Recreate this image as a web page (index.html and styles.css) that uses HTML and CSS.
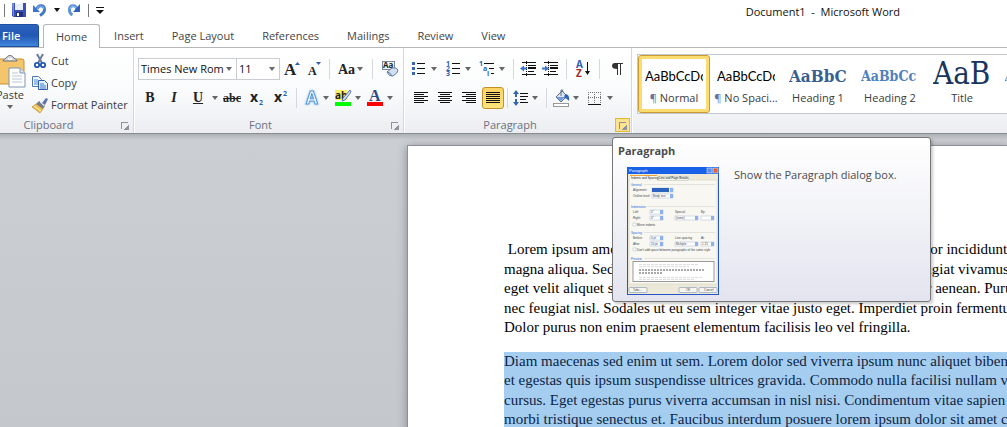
FILE: index.html
```html
<!DOCTYPE html>
<html lang="en">
<head>
<meta charset="utf-8">
<title>Document1 - Microsoft Word</title>
<link rel="stylesheet" href="styles.css">
</head>
<body>
<div class="window">
  <header class="titlebar">
    <div class="quick">
      <span class="quick-sep"></span>
      <button class="quick-btn" aria-label="Save"><svg width="14" height="14" viewBox="0 0 14 14"><path d="M0 0h14v14H1.500L0 12.500z" fill="#3c50b4"/><path d="M0 0h2v13H1z" fill="#7a8be0"/><path d="M3 0h8v7H3z" fill="#e8eefb"/><path d="M3 0h8v1H3z" fill="#fff"/><path d="M4 9h7v5H4z" fill="#23307a"/><path d="M5 10h2v3H5z" fill="#fff"/></svg></button>
      <button class="quick-btn" aria-label="Undo"><svg width="14" height="14" viewBox="0 0 14 14"><path d="M4 6C5 2 11 1.500 11.500 6c.3 3-2 5-4.500 6.500" fill="none" stroke="#3f78c8" stroke-width="3"/><path d="M4 6C5 2 10.500 2 11 6" fill="none" stroke="#7fabe6" stroke-width="1.200"/><path d="M0 2v7h7z" fill="#3a74cc"/></svg></button>
      <button class="drop quick-drop" aria-label="Undo history"></button>
      <button class="quick-btn" aria-label="Repeat"><svg width="14" height="14" viewBox="0 0 14 14"><path d="M10 6C9 2 3 1.500 2.500 6c-.3 3 1 5 3 6" fill="none" stroke="#5a92da" stroke-width="3"/><path d="M13 1v8H6z" fill="#2f63b8"/><path d="M3 6c0-3 4-4 6-1" fill="none" stroke="#9cc3f2" stroke-width="1"/></svg></button>
      <span class="quick-sep"></span>
      <button class="quick-more" aria-label="Customize"><svg width="8" height="8" viewBox="0 0 8 8"><path d="M0 1h8v1H0zM0 4h8L4 8z" fill="#111"/></svg></button>
    </div>
    <h1 class="title">Document1&nbsp; -&nbsp; Microsoft Word</h1>
  </header>

  <nav class="tabs">
    <button class="tab file">File</button>
    <button class="tab active">Home</button>
    <button class="tab">Insert</button>
    <button class="tab">Page Layout</button>
    <button class="tab">References</button>
    <button class="tab">Mailings</button>
    <button class="tab">Review</button>
    <button class="tab">View</button>
  </nav>

  <section class="ribbon">
    <div class="group clipboard">
      <div class="clip-body">
        <button class="paste"><svg width="32" height="32" viewBox="0 0 32 32"><rect x="3" y="4" width="27" height="25" rx="2" fill="#f4c56a" stroke="#c98f2e"/><path d="M9 6c0-2 3-2 4-4s5-2 6 0 4 2 4 4z" fill="#d4d7dc" stroke="#6d7278"/><path d="M14 4h4" stroke="#fff" stroke-width="1.500"/><path d="M15 13h11l5 5v14H15z" fill="#fff" stroke="#8194b4"/><path d="M26 13v5h5" fill="#dce6f5" stroke="#8194b4"/><path d="M18 18h6M18 21h10M18 24h10M18 27h10" stroke="#b9c4d6"/></svg><span>Paste</span><i class="drop"></i></button>
        <div class="clip-list">
          <button class="clip-btn"><svg width="16" height="16" viewBox="0 0 16 16"><path d="M5 1l5 9M11 1L6 10" stroke="#6c7f99" stroke-width="2"/><circle cx="5" cy="12" r="2.200" fill="none" stroke="#2458b0" stroke-width="1.800"/><circle cx="11" cy="12" r="2.200" fill="none" stroke="#2458b0" stroke-width="1.800"/></svg>Cut</button>
          <button class="clip-btn"><svg width="16" height="16" viewBox="0 0 16 16"><path d="M.5 1.500h6l3 3v7h-9z" fill="#f4f8ff" stroke="#4a76b8"/><path d="M2 5h4M2 7h5M2 9h5" stroke="#4a8ad8"/><path d="M6.500 5.500h6l3 3v6h-9z" fill="#e4eefc" stroke="#2f5da8"/><path d="M8 9h4M8 11h6M8 13h6" stroke="#3a78cc"/></svg>Copy</button>
          <button class="clip-btn"><svg width="16" height="16" viewBox="0 0 16 16"><path d="M10 6l4-5 2 1-3 6z" fill="#5b74b0"/><path d="M7 4l6 5-2 3-7-5z" fill="#777d88"/><path d="M8 5l4 4" stroke="#d9dce2"/><path d="M4 7l7 5-3 4-8-6z" fill="#edc153" stroke="#ab7c26" stroke-width=".6"/><path d="M2 9l7 5" stroke="#fff0b0"/></svg>Format Painter</button>
        </div>
      </div>
      <footer class="caption">Clipboard<button class="launch" aria-label="Clipboard dialog"></button></footer>
    </div>

    <div class="group font">
      <div class="row row-top">
        <button class="combo combo-font">Times New Rom<i class="drop"></i></button>
        <button class="combo combo-size">11<i class="drop"></i></button>
        <button class="tool" aria-label="Grow font"><svg width="18" height="18" viewBox="0 0 18 18"><text x="1" y="15" class="serif-b s17">A</text><path d="M12 5h5l-2.500-3z" fill="#2f5db0"/></svg></button>
        <button class="tool tool-s" aria-label="Shrink font"><svg width="18" height="18" viewBox="0 0 18 18"><text x="3" y="15" class="serif-b s12">A</text><path d="M11 2h5l-2.500 3z" fill="#2f5db0"/></svg></button>
        <span class="sep"></span>
        <button class="split" aria-label="Change case"><svg width="20" height="18" viewBox="0 0 20 18"><text x="3" y="14" class="serif-b s14">Aa</text></svg><i class="drop"></i></button>
        <span class="sep"></span>
        <button class="tool" aria-label="Clear formatting"><svg width="18" height="18" viewBox="0 0 18 18"><rect x="1.500" y="1.500" width="12" height="8" fill="#eef2f8" stroke="#7c8798"/><text x="2" y="8" class="sans-b s8">Aa</text><path d="M6 12l5-4q5-1 6 2 0 3-5 6-4 1-6-4z" fill="#d3dff2" stroke="#637ca8"/><path d="M6 12q3 0 5 4" fill="none" stroke="#637ca8"/></svg></button>
      </div>
      <div class="row">
        <button class="tool" aria-label="Bold"><b class="glyph">B</b></button>
        <button class="tool" aria-label="Italic"><b class="glyph"><em>I</em></b></button>
        <button class="tool" aria-label="Underline"><b class="glyph under">U</b></button>
        <button class="arrow" aria-label="Underline style"><i class="drop"></i></button>
        <button class="tool" aria-label="Strikethrough"><b class="glyph strike">abc</b></button>
        <button class="tool" aria-label="Subscript"><svg width="18" height="18" viewBox="0 0 18 18"><text x="3" y="13" class="sans-b s14">x</text><text x="12" y="16" class="sans-b s7 blue">2</text></svg></button>
        <button class="tool" aria-label="Superscript"><svg width="18" height="18" viewBox="0 0 18 18"><text x="3" y="13" class="sans-b s14">x</text><text x="12" y="7" class="sans-b s7 blue">2</text></svg></button>
        <span class="sep"></span>
        <button class="split" aria-label="Text effects"><svg width="20" height="18" viewBox="0 0 20 18"><text x="5" y="15" class="sans-b s17 effect">A</text></svg><i class="drop"></i></button>
        <button class="split" aria-label="Highlight colour"><svg width="20" height="18" viewBox="0 0 20 18"><path d="M2 1h12v10H2z" fill="#f7ee6a"/><text x="2" y="10" class="sans-b s10">ab</text><path d="M17 1l1 2-6 8-3 1 1-3z" fill="#cfdcf4" stroke="#3d5da0" stroke-width=".8"/><path d="M2 13h16v4H2z" fill="#0f0"/></svg><i class="drop"></i></button>
        <button class="split" aria-label="Font colour"><svg width="20" height="18" viewBox="0 0 20 18"><text x="4" y="12" class="serif-b s16 navy">A</text><path d="M2 13h16v4H2z" fill="#f00"/></svg><i class="drop"></i></button>
      </div>
      <footer class="caption">Font<button class="launch" aria-label="Font dialog"></button></footer>
    </div>

    <div class="group paragraph">
      <div class="row row-top">
        <button class="split wide" aria-label="Bullets"><svg width="20" height="18" viewBox="0 0 20 18"><path d="M3 2h3v3H3zM3 7h3v3H3zM3 12h3v3H3z" fill="#3a66b8"/><path d="M8 3.500h8M8 8.500h8M8 13.500h8" stroke="#111"/></svg><i class="drop"></i></button>
        <button class="split wide" aria-label="Numbering"><svg width="20" height="18" viewBox="0 0 20 18"><text x="3" y="6" class="sans-b s7 blue">1</text><text x="3" y="11" class="sans-b s7 blue">2</text><text x="3" y="16" class="sans-b s7 blue">3</text><path d="M9 3.500h8M9 8.500h8M9 13.500h8" stroke="#111"/></svg><i class="drop"></i></button>
        <button class="split" aria-label="Multilevel list"><svg width="20" height="18" viewBox="0 0 20 18"><text x="2" y="6" class="sans-b s7 blue">1</text><text x="6" y="11" class="sans-b s7 blue">a</text><text x="10" y="16" class="sans-b s7 blue">i</text><path d="M7 3.500h10M12 8.500h5M14 13.500h3" stroke="#111"/></svg><i class="drop"></i></button>
        <span class="sep"></span>
        <button class="tool tool-s" aria-label="Decrease indent"><svg width="18" height="18" viewBox="0 0 18 18"><path d="M3 2.500h14M9 5.500h8M9 11.500h6M3 14.500h14" stroke="#111"/><path d="M9 7h8v2H9z" fill="#111"/><path d="M7.500 1v16" stroke="#111" stroke-dasharray="1 1"/><path d="M1 8.500l4-3v2h3v2H5v2z" fill="#3c74cc"/></svg></button>
        <button class="tool" aria-label="Increase indent"><svg width="18" height="18" viewBox="0 0 18 18"><path d="M3 2.500h14M9 5.500h8M9 11.500h6M3 14.500h14" stroke="#111"/><path d="M9 7h8v2H9z" fill="#111"/><path d="M7.500 1v16" stroke="#111" stroke-dasharray="1 1"/><path d="M8 8.500l-4-3v2H1v2h3v2z" fill="#3c74cc"/></svg></button>
        <span class="sep"></span>
        <button class="tool" aria-label="Sort"><svg width="18" height="18" viewBox="0 0 18 18"><text x="2" y="8" class="sans-b s10 blue">A</text><text x="2" y="17" class="sans-b s10 red">Z</text><path d="M13.500 2v11" stroke="#111"/><path d="M11 11h5l-2.500 4z" fill="#111"/></svg></button>
        <span class="sep"></span>
        <button class="tool" aria-label="Show marks"><svg width="18" height="18" viewBox="0 0 18 18"><path d="M7 3h9v1h-2v11h-1V4h-2v11h-1V9C7 9 5 8 5 6s1-3 3-3z" fill="#333"/></svg></button>
      </div>
      <div class="row">
        <button class="tool" aria-label="Align left"><svg width="14" height="14" viewBox="0 0 14 14"><path d="M0 1.500h14M0 3.500h10M0 5.500h14M0 7.500h10M0 9.500h14M0 11.500h10" stroke="#111"/></svg></button>
        <button class="tool" aria-label="Centre"><svg width="14" height="14" viewBox="0 0 14 14"><path d="M0 1.500h14M2 3.500h10M0 5.500h14M2 7.500h10M0 9.500h14M2 11.500h10" stroke="#111"/></svg></button>
        <button class="tool" aria-label="Align right"><svg width="14" height="14" viewBox="0 0 14 14"><path d="M0 1.500h14M4 3.500h10M0 5.500h14M4 7.500h10M0 9.500h14M4 11.500h10" stroke="#111"/></svg></button>
        <button class="tool on" aria-label="Justify"><svg width="14" height="14" viewBox="0 0 14 14"><path d="M0 1.500h14M0 3.500h14M0 5.500h14M0 7.500h14M0 9.500h14M0 11.500h14" stroke="#111"/></svg></button>
        <span class="sep sep-s"></span>
        <button class="split" aria-label="Line spacing"><svg width="20" height="18" viewBox="0 0 20 18"><path d="M6 1l3 4H7v3H5V5H3zM6 17l-3-4h2v-3h2v3h2z" fill="#3565b8"/><path d="M10 4.500h8M10 7.500h8M10 10.500h6M10 13.500h8" stroke="#111"/></svg><i class="drop"></i></button>
        <span class="sep"></span>
        <button class="split wide" aria-label="Shading"><svg width="20" height="18" viewBox="0 0 20 18"><path d="M5 8l6-6 5 5-6 6z" fill="#dbe5f2" stroke="#5d6f8c"/><path d="M10 7V1q2-1 2 2" fill="none" stroke="#5d6f8c"/><path d="M14 5q5 0 4 7-2-3-5-3z" fill="#2e62b8"/><path d="M5 8h9l-4 4z" fill="#6e9bdc"/><rect x="2.500" y="14.500" width="15" height="3" fill="#fff" stroke="#999"/></svg><i class="drop"></i></button>
        <button class="split wide" aria-label="Borders"><svg width="20" height="18" viewBox="0 0 20 18"><path d="M3 3.500h13M3 8.500h13M3.500 3v11M9.500 3v11M15.500 3v11" stroke="#777" stroke-dasharray="1 1"/><path d="M3 15.500h13" stroke="#111"/></svg><i class="drop"></i></button>
      </div>
      <footer class="caption">Paragraph<button class="launch hot" aria-label="Paragraph dialog" aria-describedby="tip"></button></footer>

      <aside class="tooltip" id="tip" role="tooltip">
        <h2>Paragraph</h2>
        <div class="tip-body">
          <svg class="thumb" width="92" height="128" viewBox="0 0 92 128">
            <rect width="92" height="128" fill="#2456c8"/><rect width="92" height="7" fill="#1760e8"/>
            <rect x="1" y="7" width="90" height="120" fill="#ece9d8"/>
            <rect x="80" y="1" width="5" height="5" fill="#5b8df0" stroke="#fff" stroke-width=".5"/><rect x="86" y="1" width="5" height="5" fill="#e0603a" stroke="#fff" stroke-width=".5"/>
            <text x="2" y="5" class="mini mini-w">Paragraph</text>
            <rect x="2" y="13" width="88" height="104" fill="#f8f7f1" stroke="#d0cdbf" stroke-width=".5"/>
            <rect x="3" y="8.500" width="27" height="5" fill="#f8f7f1"/><path d="M3 8.500h27" stroke="#f0a030"/>
            <rect x="31" y="9.500" width="30" height="4" fill="#f4f3ea" stroke="#c4c1b2" stroke-width=".5"/>
            <text x="4" y="12" class="mini">Indents and Spacing</text><text x="32" y="12" class="mini">Line and Page Breaks</text>
            <g class="mini mini-b"><text x="4" y="19">General</text><text x="4" y="41">Indentation</text><text x="4" y="67">Spacing</text><text x="4" y="93">Preview</text></g>
            <path d="M17 17.500h71M20 39.500h68M17 65.500h71M17 91.500h71" stroke="#d6d5cc" stroke-width=".6"/>
            <g fill="#fff" stroke="#a8bbd8" stroke-width=".5"><rect x="25" y="21" width="21" height="4"/><rect x="25" y="27" width="21" height="4"/><rect x="23" y="43" width="13" height="4"/><rect x="23" y="49" width="13" height="4"/><rect x="48" y="49" width="23" height="4"/><rect x="74" y="49" width="13" height="4"/><rect x="23" y="69" width="13" height="4"/><rect x="23" y="75" width="13" height="4"/><rect x="48" y="75" width="23" height="4"/><rect x="74" y="75" width="13" height="4"/><rect x="6" y="56" width="3" height="3"/><rect x="6" y="81" width="3" height="3"/></g>
            <rect x="25" y="21" width="17" height="4" fill="#2c62c0"/>
            <path d="M43 21h3v4h-3zM43 27h3v4h-3zM33 43h3v4h-3zM33 49h3v4h-3zM68 49h3v4h-3zM84 49h3v4h-3zM33 69h3v4h-3zM33 75h3v4h-3zM68 75h3v4h-3zM84 75h3v4h-3z" fill="#8eb0ee"/>
            <g class="mini"><text x="6" y="24">Alignment:</text><text x="6" y="30">Outline level:</text><text x="26" y="30">Body text</text><text x="6" y="46">Left:</text><text x="6" y="52">Right:</text><text x="48" y="46">Special:</text><text x="74" y="46">By:</text><text x="10" y="59">Mirror indents</text><text x="6" y="72">Before:</text><text x="6" y="78">After:</text><text x="48" y="72">Line spacing:</text><text x="74" y="72">At:</text><text x="10" y="84">Don't add space between paragraphs of the same style</text></g>
            <g class="mini"><text x="24" y="46">0"</text><text x="24" y="52">0"</text><text x="49" y="52">(none)</text><text x="24" y="72">0 pt</text><text x="24" y="78">10 pt</text><text x="49" y="78">Multiple</text><text x="75" y="78">1.15</text></g>
            <rect x="6" y="94.500" width="81" height="20" fill="#fff" stroke="#999"/>
            <path d="M12 97.500h60M12 99.500h50M12 110.500h63M12 112.500h56" stroke="#ddd" stroke-dasharray="3 1"/><path d="M12 103h65M12 106h24" stroke="#aaa" stroke-width="2" stroke-dasharray="2 1"/>
            <g fill="#f6f5ef" stroke="#8294b2" stroke-width=".6"><rect x="2" y="120.500" width="18" height="5" rx="1"/><rect x="52" y="120.500" width="18" height="5" rx="1"/><rect x="72" y="120.500" width="18" height="5" rx="1"/></g>
            <g class="mini"><text x="6" y="124">Tabs...</text><text x="59" y="124">OK</text><text x="77" y="124">Cancel</text></g>
          </svg>
          <p>Show the Paragraph dialog box.</p>
        </div>
      </aside>
    </div>

    <div class="group styles">
      <div class="gallery">
        <button class="style selected"><span class="preview">AaBbCcDc</span><span class="name"><i>¶</i> Normal</span></button>
        <button class="style"><span class="preview">AaBbCcDc</span><span class="name"><i>¶</i> No Spaci...</span></button>
        <button class="style"><span class="preview h1">AaBbCc</span><span class="name">Heading 1</span></button>
        <button class="style"><span class="preview h2">AaBbCc</span><span class="name">Heading 2</span></button>
        <button class="style"><span class="preview big">AaB</span><span class="name">Title</span></button>
        <button class="style"><span class="preview sub">AaBbCc</span><span class="name">Subtitle</span></button>
      </div>
    </div>
  </section>

  <main class="workspace">
    <article class="page">
      <p>
        <span class="line">&nbsp;Lorem ipsum amet, consectetur adipiscing elit, a sed do eiusmod tempor incididunt</span>
        <span class="line">magna aliqua. Sed turpis tincidunt id aliquet risus feugiat in metus. Feugiat vivamus</span>
        <span class="line">eget velit aliquet sagittis id consectetur purus ut faucibus vitae pulvinar aenean. Purus</span>
        <span class="line">nec feugiat nisl. Sodales ut eu sem integer vitae justo eget. Imperdiet proin fermentum</span>
        <span class="line">Dolor purus non enim praesent elementum facilisis leo vel fringilla.</span>
      </p>
      <p class="marked">
        <span class="line">Diam maecenas sed enim ut sem. Lorem dolor sed viverra ipsum nunc aliquet bibendum</span>
        <span class="line">et egestas quis ipsum suspendisse ultrices gravida. Commodo nulla facilisi nullam vehicula</span>
        <span class="line">cursus. Eget egestas purus viverra accumsan in nisl nisi. Condimentum vitae sapien pellentesque</span>
        <span class="line">morbi tristique senectus et. Faucibus interdum posuere lorem ipsum dolor sit amet consectetur</span>
      </p>
    </article>
  </main>
</div>
</body>
</html>
```
FILE: styles.css
```css
* { box-sizing: border-box; }
html, body { height: 100%; }
body { margin: 0; overflow: hidden; font: 11px/16px "Open Sans", "Noto Sans", sans-serif; color: #3b3b3b; background: #fff; }
button { margin: 0; padding: 0; border: 0; background: none; font: inherit; color: inherit; }
svg { display: block; flex: none; overflow: visible; }
.window { display: flex; flex-direction: column; min-height: 100vh; }

/* Title bar */
.titlebar { display: flex; align-items: center; height: 24px; }
.quick { display: flex; align-items: center; flex: 1; gap: 7px; padding: 0 0 4px 4px; }
.quick-sep { width: 1px; height: 13px; background: #777; }
.quick-btn { display: flex; }
.title { margin: 0; padding-right: 107px; font-size: 11px; font-weight: 400; color: #111; }
.drop { flex: none; width: 6px; height: 4px; background: #666; clip-path: polygon(0 0, 100% 0, 50% 100%); }
.quick-drop { background: #111; }

/* Tabs */
.tabs { display: flex; align-items: flex-end; height: 24px; border-bottom: 1px solid #b4b6ba; }
.tab { height: 23px; padding: 0 14px; color: #444; }
.tab.file { width: 39px; padding: 0 0 0 2px; margin-right: 4px; text-align: left; color: #fff; font-weight: 600; border: 1px solid #1f4fa0; border-left: 0; border-radius: 0 3px 0 0; background: linear-gradient(#2c64bd, #2358b4 50%, #3f86dc); }
.tab.active { height: 24px; margin-bottom: -1px; padding: 0 12px; border: 1px solid #b4b6ba; border-bottom: 0; border-radius: 3px 3px 0 0; background: #fff; }

/* Ribbon */
.ribbon { position: relative; z-index: 1; display: flex; height: 86px; background: linear-gradient(#fff, #fafbfc 50%, #ebedf1); border-bottom: 1px solid #888c93; }
.group { position: relative; display: flex; flex-direction: column; flex: none; border-right: 1px solid #d3d6db; box-shadow: 1px 0 #fff; }
.caption { position: relative; margin-top: auto; padding: 0 20px 1px 0; line-height: 14px; text-align: center; color: #6c7280; }
.launch { position: absolute; right: 1px; top: 0; width: 15px; height: 14px; background: linear-gradient(#8d929c, #8d929c) 4px 4px / 7px 1px no-repeat, linear-gradient(#8d929c, #8d929c) 4px 4px / 1px 7px no-repeat, linear-gradient(135deg, transparent 50%, #8d929c 50%) 7px 7px / 5px 5px no-repeat; }
.launch.hot { background-color: #fce391; box-shadow: inset 0 0 0 1px #e3b92e; }
.row { display: flex; align-items: center; height: 24px; }
.row-top { margin: 9px 0 5px; }
.tool, .split, .arrow { display: flex; align-items: center; justify-content: center; height: 22px; }
.tool { width: 24px; }
.tool-s { width: 20px; }
.split { width: 32px; gap: 2px; justify-content: flex-start; }
.split.wide { width: 34px; }
.arrow { width: 10px; }
.sep { width: 1px; height: 20px; margin: 0 4px; background: #d5d8dd; }
.sep-s { margin: 0 2px; }
.tool.on { width: 22px; margin: 0 1px; border: 1px solid #c29028; border-radius: 3px; background: linear-gradient(#fbd464, #fee47c); }

.clipboard { width: 134px; }
.clipboard .caption { padding-right: 36px; }
.clip-body { display: flex; padding-top: 2px; }
.paste { display: flex; flex-direction: column; align-items: center; width: 40px; margin-left: -10px; padding-top: 5px; }
.paste .drop { margin-top: 2px; }
.clip-btn { display: flex; align-items: center; gap: 3px; height: 22px; margin-left: 2px; }

.font { width: 270px; padding-left: 4px; }
.font .row-top .sep { margin: 0 5px; }
.combo { display: flex; align-items: center; justify-content: space-between; height: 22px; padding: 0 4px 0 2px; border: 1px solid #c9ccd1; background: #fff; color: #111; }
.combo-font { width: 99px; }
.combo-size { width: 43px; border-left: 0; }
.glyph { font: bold 14px/16px "Liberation Serif", serif; color: #222; }
.under { text-decoration: underline; }
.strike { font-size: 12px; text-decoration: line-through; }
text { fill: #222; }
.serif-b { font-family: "Liberation Serif", serif; font-weight: bold; }
.sans-b { font-family: "Open Sans", sans-serif; font-weight: bold; }
.s7 { font-size: 7px; } .s8 { font-size: 8px; } .s10 { font-size: 10px; } .s12 { font-size: 12px; }
.s14 { font-size: 14px; } .s16 { font-size: 16px; } .s17 { font-size: 17px; }
.blue { fill: #2f5fb5; } .red { fill: #9c2a2a; } .navy { fill: #2b4a86; }
.effect { fill: #eef6ff; stroke: #5a9ad8; filter: drop-shadow(0 0 1px #7fb8ec); }

.paragraph { width: 228px; padding-left: 5px; }

/* Style gallery */
.styles { flex: 1; min-width: 0; padding: 6px 0 0 5px; border: 0; }
.gallery { display: flex; height: 60px; overflow: hidden; border: 1px solid #c4c8ce; border-right: 0; background: #fff; }
.style { display: flex; flex-direction: column; flex: none; align-items: center; width: 72px; padding: 6px 7px 0; }
.style.selected { padding: 5px 6px 0; border: 1px solid #cc9a30; border-radius: 3px; box-shadow: inset 0 0 0 3px #fbdc70; }
.preview { width: 58px; height: 29px; overflow: hidden; font: 13px/31px Lato, sans-serif; color: #000; white-space: nowrap; text-align: left; }
.name { white-space: nowrap; }
.name i { font-style: normal; color: #6b6f9c; }
.h1, .h2 { font-family: "DejaVu Serif Condensed", "DejaVu Serif", serif; font-weight: bold; color: #365f91; }
.h1 { font-size: 17px; }
.h2 { font-size: 14px; color: #4f81bd; }
.big { font: 31px/24px "DejaVu Serif Condensed", serif; color: #17365d; }
.sub { font: italic 14px/31px "DejaVu Serif Condensed", serif; color: #4f81bd; }

/* Tooltip over the document */
.tooltip { position: absolute; z-index: 2; left: 208px; top: 89px; width: 319px; height: 165px; padding: 5px; border: 1px solid #767676; border-radius: 3px; background: linear-gradient(#fff, #e3e4ef); box-shadow: 2px 2px 3px rgba(0, 0, 0, .2); color: #4c4c4c; }
.tooltip h2 { margin: 0 0 8px; font-size: 11px; line-height: 16px; }
.tip-body { display: flex; gap: 15px; padding-left: 9px; }
.tip-body p { margin: 0; }
.mini { font-family: "Liberation Sans", sans-serif; font-size: 3px; }
.mini text { fill: #444; }
.mini-w { fill: #fff; font-size: 4px; }
.mini-b text { fill: #2c6ae0; }

/* Document */
.workspace { flex: 1; display: flex; padding: 12px 0 0 408px; overflow: hidden; background: linear-gradient(#adb1b6, #cbced3 6px, #c4c7cc); }
.page { flex: 1; min-width: 0; padding: 94px 0 0 96px; background: #fff; box-shadow: 0 0 0 1px #8d9197, 0 2px 9px 1px #85898f; font: 15px/1.3 "Liberation Serif", serif; color: #000; white-space: nowrap; }
.page p { margin: 0 0 14px; }
.line { display: block; }
.marked { background: #a5cdf0; color: #0b2545; }
```
